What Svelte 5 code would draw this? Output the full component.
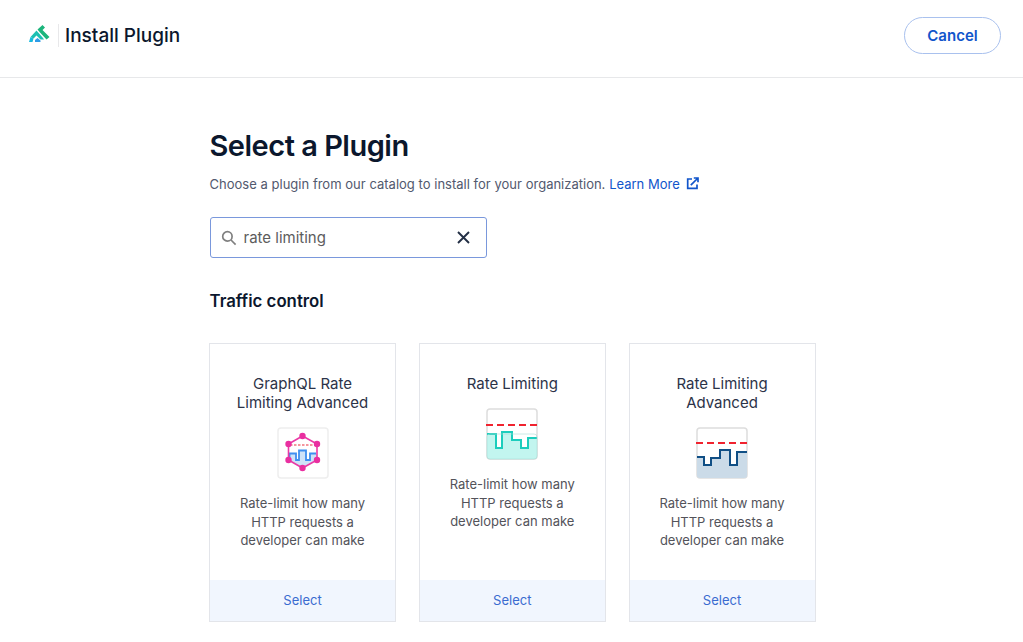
<script>
  const plugins = [
    { name: "GraphQL Rate Limiting Advanced", icon: "graphql" },
    { name: "Rate Limiting", icon: "basic" },
    { name: "Rate Limiting Advanced", icon: "advanced" }
  ];
</script>

<header class="topbar">
  <div class="brand">
    <svg class="logo" width="22" height="20" viewBox="0 0 22 20">
      <path d="M9.5 5.5 14.5 1 17 3.5 14.5 6 21.5 13 18.5 15.5 12 8.5z" fill="#1cb57c" />
      <path d="M2.5 13 8.5 6.5 15 14 16 15.5H12.5L8.5 11.5 5.5 14.5z" fill="#1cc0b2" />
      <path d="M2.5 13 5.5 14.5 4.5 18H1z" fill="#17b9dd" />
      <path d="M7 16 9.5 14 12.5 16.5 12.5 18H7z" fill="#2e9ce8" />
    </svg>
    <span class="divider"></span>
    <span class="page-name">Install Plugin</span>
  </div>
  <button class="cancel">Cancel</button>
</header>

<main class="content">
  <h1>Select a Plugin</h1>
  <p class="lead">
    Choose a plugin from our catalog to install for your organization.
    <a href="#learn">Learn More
      <svg width="13" height="13" viewBox="0 0 13 13" fill="none" stroke="#1155cb" stroke-width="1.7">
        <path d="M6 2H1.7v9.3H11V7.5" />
        <path d="M4.8 8.2 11.5 1.5M7.8 1h4.2v4.2" />
      </svg>
    </a>
  </p>

  <div class="search">
    <svg width="16" height="16" viewBox="0 0 16 16" fill="none" stroke="#7f7f7f" stroke-width="1.7">
      <circle cx="6.4" cy="6.4" r="4.7" />
      <path d="M10 10l4.6 4.6" />
    </svg>
    <span class="query">rate limiting</span>
    <svg class="clear" width="13" height="13" viewBox="0 0 13 13" stroke="#232f45" stroke-width="1.9" fill="none">
      <path d="M1 1l11 11M12 1 1 12" />
    </svg>
  </div>

  <h2>Traffic control</h2>

  <div class="cards">
    {#each plugins as plugin}
      <article class="card">
        <div class="body">
          <h3>{plugin.name}</h3>
          <div class="icon">
            {#if plugin.icon === "graphql"}
              <svg width="52" height="52" viewBox="0 0 52 52">
                <rect x="1" y="1" width="50" height="50" rx="3" fill="#fff" stroke="#eeeeee" stroke-width="1.5" />
                <path d="M12.5 33V26.5H19V33H22V23.5H29V33H33V26.5H40V33L25.5 41 11.5 33z" fill="#cfe3f8" />
                <path d="M12.5 33V26.5H19V33H22V23.5H29V33H33V26.5H39" fill="none" stroke="#3f8ff0" stroke-width="1.8" />
                <path d="M25.5 9 40 17V33L25.5 41 11.5 33V17z" fill="none" stroke="#ea3aa6" stroke-width="1.6" />
                <path d="M13 18H39" stroke="#ea2f3f" stroke-width="1.2" stroke-dasharray="2.5 1.5" />
                <g fill="#e92fa0">
                  <circle cx="25.5" cy="9" r="3.2" />
                  <circle cx="40" cy="17" r="3.2" />
                  <circle cx="40" cy="33" r="3.2" />
                  <circle cx="25.5" cy="41" r="3.2" />
                  <circle cx="11.5" cy="33" r="3.2" />
                  <circle cx="11.5" cy="17" r="3.2" />
                </g>
              </svg>
            {:else if plugin.icon === "basic"}
              <svg width="52" height="52" viewBox="0 0 52 52">
                <rect x="1" y="1" width="50" height="50" rx="3" fill="#fff" stroke="#dddddd" stroke-width="1.5" />
                <path d="M1 26H10V40H16V24H26V32H35V40H42V30H51V48a3 3 0 0 1-3 3H4a3 3 0 0 1-3-3z" fill="#c2f5ef" />
                <path d="M1 26H10V40H16V24H26V32H35V40H42V30H51" fill="none" stroke="#1ccdbd" stroke-width="2" />
                <rect x="1" y="26" width="50" height="25" rx="3" fill="none" stroke="#a8dcd6" stroke-width="1" opacity="0.6" />
                <path d="M0 17H52" stroke="#f0232f" stroke-width="1.8" stroke-dasharray="7 4" />
              </svg>
            {:else}
              <svg width="52" height="52" viewBox="0 0 52 52">
                <rect x="1" y="1" width="50" height="50" rx="3" fill="#fff" stroke="#dddddd" stroke-width="1.5" />
                <path d="M1 30H8V38H15V31H24V23H34V38H41V25H51V48a3 3 0 0 1-3 3H4a3 3 0 0 1-3-3z" fill="#cbdbe8" />
                <path d="M1 30H8V38H15V31H24V23H34V38H41V25H51" fill="none" stroke="#104f85" stroke-width="2" />
                <path d="M0 16H52" stroke="#f0232f" stroke-width="1.8" stroke-dasharray="7 4" />
              </svg>
            {/if}
          </div>
          <p>Rate-limit how many HTTP requests a developer can make</p>
        </div>
        <div class="select">Select</div>
      </article>
    {/each}
  </div>
</main>

<style>
  :global(body) {
    background: #fff;
    font-family: Inter, "Liberation Sans", sans-serif;
  }

  .topbar {
    height: 78px;
    display: flex;
    align-items: center;
    justify-content: space-between;
    padding: 0 22px 7px 28px;
    box-sizing: border-box;
    border-bottom: 1px solid #e7e8ea;
  }

  .brand {
    display: flex;
    align-items: center;
  }

  .logo {
    margin-right: 8px;
    margin-top: -3px;
  }

  .divider {
    width: 1px;
    height: 23px;
    background: #e8e8ea;
    margin-right: 6px;
  }

  .page-name {
    font-size: 19px;
    font-weight: 500;
    color: #0b172d;
  }

  .cancel {
    width: 97px;
    height: 37px;
    border: 1px solid #a9c1ee;
    border-radius: 19px;
    background: #fff;
    color: #1155cb;
    font: 600 15px Inter, sans-serif;
  }

  .content {
    margin-left: 209.5px;
    padding-top: 48px;
  }

  h1 {
    margin: 0;
    font-size: 29px;
    line-height: 40px;
    font-weight: 600;
    letter-spacing: -0.5px;
    color: #0b172d;
  }

  .lead {
    margin: 9px 0 0;
    font-size: 13px;
    line-height: 18px;
    word-spacing: 0.1px;
    color: #52596e;
  }

  .lead a {
    color: #1155cb;
    text-decoration: none;
  }

  .lead svg {
    margin-left: 2px;
    vertical-align: -1px;
  }

  .search {
    width: 277px;
    height: 41px;
    margin-top: 24px;
    box-sizing: border-box;
    border: 1px solid #7a98dc;
    border-radius: 3px;
    display: flex;
    align-items: center;
    padding: 0 16px 0 10px;
  }

  .query {
    margin-left: 7px;
    font-size: 15px;
    line-height: 20px;
    padding-top: 1px;
    color: #5c5c5c;
    flex: 1;
  }

  h2 {
    margin: 32px 0 0;
    font-size: 16.8px;
    line-height: 22px;
    font-weight: 600;
    color: #0b172d;
  }

  .cards {
    display: flex;
    gap: 22.75px;
    margin-top: 31px;
    margin-left: -0.5px;
  }

  .card {
    width: 187px;
    height: 279px;
    box-sizing: border-box;
    border: 1px solid #e3e5ea;
    display: flex;
    flex-direction: column;
  }

  .body {
    flex: 1;
    padding: 30px 20px 0;
    text-align: center;
  }

  h3 {
    margin: 0;
    font-size: 15px;
    line-height: 19px;
    font-weight: 400;
    color: #2c3348;
  }

  .icon {
    height: 52px;
    margin-top: 15px;
  }

  .body p {
    margin: 15px 0 0;
    font-size: 13px;
    line-height: 18.6px;
    color: #53535a;
  }

  .select {
    height: 41px;
    line-height: 41px;
    text-align: center;
    background: #f1f6fe;
    color: #3a6bd0;
    font-size: 13px;
  }
</style>
